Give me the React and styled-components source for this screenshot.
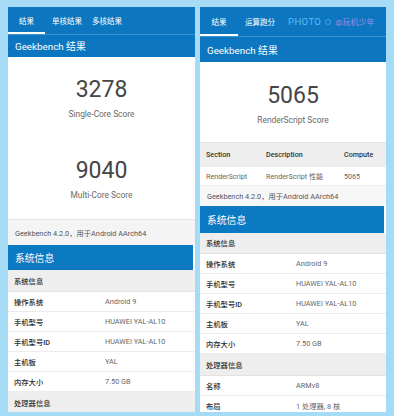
import React from "react";
import styled, { createGlobalStyle } from "styled-components";

const Global = createGlobalStyle`
  html, body { margin: 0; padding: 0; }
  body {
    background: #a6dbf6;
    font-family: Roboto, "Noto Sans CJK SC", sans-serif;
  }
`;

const Page = styled.div`
  width: 394px;
  height: 416px;
  box-sizing: border-box;
  padding: 7px 8px 4px 8px;
  display: flex;
  gap: 5px;
  background: #a6dbf6;
  overflow: hidden;
`;

const Panel = styled.div`
  width: ${(p) => p.$w}px;
  height: 405px;
  background: #ffffff;
  display: flex;
  flex-direction: column;
  overflow: hidden;
`;

const TabBar = styled.div`
  height: ${(p) => p.$h}px;
  flex: none;
  background: #0c77c0;
  display: flex;
  align-items: stretch;
  box-sizing: border-box;
`;

const Tab = styled.div`
  position: relative;
  display: flex;
  align-items: center;
  justify-content: center;
  width: ${(p) => p.$w}px;
  color: #ffffff;
  font-size: 7.5px;
  white-space: nowrap;
  ${(p) =>
    p.$active &&
    `&::after{content:"";position:absolute;left:0;right:0;bottom:0;height:2px;background:#ffffff;}`}
`;

const Watermark = styled.div`
  display: flex;
  align-items: center;
  gap: 4px;
  padding-left: 6px;
  white-space: nowrap;
`;

const WmPhoto = styled.span`
  color: #5cbaf4;
  font-size: 9.5px;
  letter-spacing: 0.4px;
`;

const WmName = styled.span`
  color: #a08be8;
  font-size: 8px;
`;

const WmDot = styled.span`
  width: 6px;
  height: 6px;
  border-radius: 50%;
  border: 1px solid #4a9fe6;
  box-sizing: border-box;
`;

const TitleBar = styled.div`
  height: ${(p) => p.$h}px;
  flex: none;
  background: #0c77c0;
  color: #ffffff;
  display: flex;
  align-items: center;
  padding-left: 7px;
  font-size: 9.8px;
  border-top: 1px solid #3b94cf;
  box-sizing: border-box;
`;

const ScoreArea = styled.div`
  height: ${(p) => p.$h}px;
  flex: none;
  display: flex;
  flex-direction: column;
  align-items: center;
  padding-top: ${(p) => p.$pt}px;
  box-sizing: border-box;
  border-bottom: 1px solid #e4e4e4;
`;

const ScoreBlock = styled.div`
  display: flex;
  flex-direction: column;
  align-items: center;
  margin-bottom: ${(p) => p.$mb || 0}px;
`;

const Score = styled.div`
  font-size: 23px;
  line-height: 26px;
  color: #454545;
  font-weight: 400;
`;

const ScoreLabel = styled.div`
  font-size: 8.4px;
  line-height: 10px;
  margin-top: 6px;
  color: #6a6a6a;
`;

const Footnote = styled.div`
  height: ${(p) => p.$h}px;
  flex: none;
  background: ${(p) => p.$bg || "#f4f4f4"};
  color: #555;
  font-size: 7.3px;
  display: flex;
  align-items: center;
  padding-left: 7px;
  white-space: nowrap;
`;

const SectionBar = styled.div`
  height: ${(p) => p.$h}px;
  flex: none;
  background: #0c79c3;
  color: #ffffff;
  display: flex;
  align-items: center;
  padding-left: 7px;
  font-size: 9.8px;
  margin-right: 2px;
`;

const GroupHeader = styled.div`
  height: ${(p) => p.$h}px;
  flex: none;
  background: #eeeeee;
  color: #333;
  display: flex;
  align-items: center;
  padding-left: 6px;
  font-size: 7.3px;
  font-weight: 500;
  border-bottom: 1px solid #e2e2e2;
  box-sizing: border-box;
`;

const Row = styled.div`
  height: ${(p) => p.$h || 20}px;
  flex: none;
  display: grid;
  grid-template-columns: ${(p) => p.$cols};
  align-items: center;
  padding-left: 6px;
  border-bottom: 1px solid #ececec;
  box-sizing: border-box;
  background: ${(p) => (p.$head ? "#eeeeee" : "#ffffff")};
  white-space: nowrap;
`;

const Label = styled.div`
  font-size: 7.3px;
  color: #2e2e2e;
  font-weight: 500;
`;

const Value = styled.div`
  font-size: 7.3px;
  color: #666;
`;

const HeadCell = styled.div`
  font-size: 7.2px;
  color: #333;
  font-weight: 500;
`;

const Cell = styled.div`
  font-size: 7.2px;
  color: #666;
`;

const sysRows = [
  ["操作系统", "Android 9"],
  ["手机型号", "HUAWEI YAL-AL10"],
  ["手机型号ID", "HUAWEI YAL-AL10"],
  ["主机板", "YAL"],
  ["内存大小", "7.50 GB"],
];

const cpuRows = [
  ["名称", "ARMv8"],
  ["布局", "1 处理器, 8 核"],
];

export default function App() {
  return (
    <>
      <Global />
      <Page>
        <Panel $w={187}>
          <TabBar $h={27}>
            <Tab $w={37} $active>结果</Tab>
            <Tab $w={44}>单核结果</Tab>
            <Tab $w={36}>多核结果</Tab>
          </TabBar>
          <TitleBar $h={23}>Geekbench 结果</TitleBar>
          <ScoreArea $h={163} $pt={20}>
            <ScoreBlock $mb={39}>
              <Score>3278</Score>
              <ScoreLabel>Single-Core Score</ScoreLabel>
            </ScoreBlock>
            <ScoreBlock>
              <Score>9040</Score>
              <ScoreLabel>Multi-Core Score</ScoreLabel>
            </ScoreBlock>
          </ScoreArea>
          <Footnote $h={25}>Geekbench 4.2.0，用于Android AArch64</Footnote>
          <SectionBar $h={25}>系统信息</SectionBar>
          <GroupHeader $h={22}>系统信息</GroupHeader>
          {sysRows.map(([l, v]) => (
            <Row key={l} $cols="91px 1fr" $h={20}>
              <Label>{l}</Label>
              <Value>{v}</Value>
            </Row>
          ))}
          <GroupHeader $h={22}>处理器信息</GroupHeader>
        </Panel>

        <Panel $w={186}>
          <TabBar $h={29}>
            <Tab $w={38} $active>结果</Tab>
            <Tab $w={44}>运算跑分</Tab>
            <Watermark>
              <WmPhoto>PHOTO</WmPhoto>
              <WmDot />
              <WmName>@玩机少年</WmName>
            </Watermark>
          </TabBar>
          <TitleBar $h={26}>Geekbench 结果</TitleBar>
          <ScoreArea $h={81} $pt={21}>
            <ScoreBlock>
              <Score>5065</Score>
              <ScoreLabel>RenderScript Score</ScoreLabel>
            </ScoreBlock>
          </ScoreArea>
          <Row $head $h={24} $cols="60px 78px 1fr">
            <HeadCell>Section</HeadCell>
            <HeadCell>Description</HeadCell>
            <HeadCell>Compute</HeadCell>
          </Row>
          <Row $h={19} $cols="60px 78px 1fr">
            <Cell>RenderScript</Cell>
            <Cell>RenderScript 性能</Cell>
            <Cell>5065</Cell>
          </Row>
          <Footnote $h={20} $bg="#f7f7f7">Geekbench 4.2.0，用于Android AArch64</Footnote>
          <SectionBar $h={27}>系统信息</SectionBar>
          <GroupHeader $h={21}>系统信息</GroupHeader>
          {sysRows.map(([l, v]) => (
            <Row key={l} $cols="90px 1fr" $h={20}>
              <Label>{l}</Label>
              <Value>{v}</Value>
            </Row>
          ))}
          <GroupHeader $h={22}>处理器信息</GroupHeader>
          {cpuRows.map(([l, v]) => (
            <Row key={l} $cols="90px 1fr" $h={20}>
              <Label>{l}</Label>
              <Value>{v}</Value>
            </Row>
          ))}
        </Panel>
      </Page>
    </>
  );
}
